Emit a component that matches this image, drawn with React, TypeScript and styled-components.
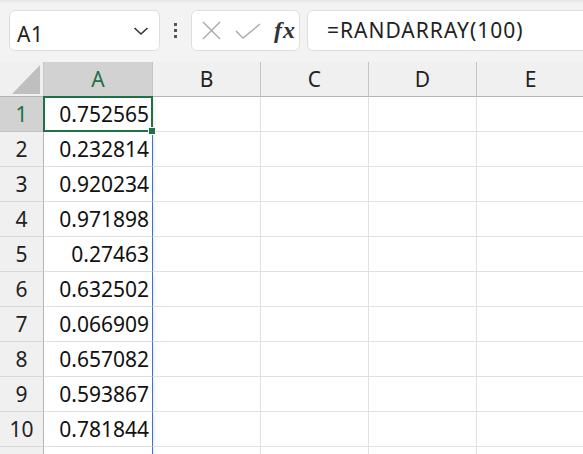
import React from 'react';
import styled, { createGlobalStyle } from 'styled-components';

// row 11 is only a sliver at the bottom edge, so it stays empty
const values = [
  '0.752565',
  '0.232814',
  '0.920234',
  '0.971898',
  '0.27463',
  '0.632502',
  '0.066909',
  '0.657082',
  '0.593867',
  '0.781844',
  '',
];

const columns = ['A', 'B', 'C', 'D', 'E'];

const GREEN = '#1e7145';
const GRID = '#e1e1e1';
const HEAD_LINE = '#c6c6c6';

const GlobalStyle = createGlobalStyle`
  html, body {
    margin: 0;
    padding: 0;
    background: #ffffff;
  }
`;

const App = () => {
  return (
    <>
      <GlobalStyle />
      <Window>
        <Toolbar>
          <NameBox>
            <NameText>A1</NameText>
            <svg width="16" height="10" viewBox="0 0 16 10">
              <path d="M1.5 2 L8 8 L14.5 2" fill="none" stroke="#333" strokeWidth="1.6" />
            </svg>
          </NameBox>
          <Grip>
            <Dot />
            <Dot />
            <Dot />
          </Grip>
          <FxBox>
            <svg width="19" height="19" viewBox="0 0 19 19">
              <path d="M1 1 L18 18 M18 1 L1 18" stroke="#a9a9a9" strokeWidth="1.4" fill="none" />
            </svg>
            <svg width="26" height="16" viewBox="0 0 26 16">
              <path d="M1 8 L8 15 L25 1" stroke="#a9a9a9" strokeWidth="1.4" fill="none" />
            </svg>
            <FxLabel>fx</FxLabel>
          </FxBox>
          <FormulaBar>=RANDARRAY(100)</FormulaBar>
        </Toolbar>

        <Sheet>
          <Corner>
            <svg width="29" height="30" viewBox="0 0 29 30">
              <polygon points="28,0 28,29 0,29" fill="#bfbfbf" />
            </svg>
          </Corner>
          {columns.map((c, i) => (
            <ColHeader key={c} selected={i === 0}>{c}</ColHeader>
          ))}

          {values.map((v, r) => (
            <React.Fragment key={r}>
              <RowHeader selected={r === 0}>{v ? r + 1 : ''}</RowHeader>
              {columns.map((c, i) => (
                <Cell key={c} active={r === 0 && i === 0} spill={i === 0}>
                  {i === 0 ? v : ''}
                </Cell>
              ))}
            </React.Fragment>
          ))}
        </Sheet>
      </Window>
    </>
  );
};

export default App;

const Window = styled.div`
  width: 583px;
  height: 454px;
  overflow: hidden;
  background: #ffffff;
  font-family: "Noto Sans", "Noto Sans CJK JP", sans-serif;
  color: #222;
`;

const Toolbar = styled.div`
  display: flex;
  align-items: center;
  height: 62px;
  padding: 10px 0 11px 9px;
  box-sizing: border-box;
  background: linear-gradient(#e6e6e6 0px, #f1f1f1 3px, #f3f3f3 6px);
`;

const NameBox = styled.div`
  display: flex;
  align-items: center;
  justify-content: space-between;
  width: 151px;
  height: 41px;
  padding: 6px 10px 0 7px;
  box-sizing: border-box;
  background: #fff;
  border: 1px solid #dedede;
  border-radius: 6px;

  svg {
    margin-top: -5px;
  }
`;

const NameText = styled.span`
  font-size: 21px;
  letter-spacing: 0.5px;
  color: #222;
`;

const Grip = styled.div`
  display: flex;
  flex-direction: column;
  align-items: center;
  gap: 3px;
  width: 31px;
  margin-top: -1px;
`;

const Dot = styled.span`
  width: 3px;
  height: 3px;
  background: #555;
`;

const FxBox = styled.div`
  display: flex;
  align-items: center;
  gap: 14px;
  width: 109px;
  height: 41px;
  padding-left: 10px;
  box-sizing: border-box;
  background: #fff;
  border: 1px solid #dedede;
  border-radius: 6px;
`;

const FxLabel = styled.span`
  margin-left: -1px;
  font-family: "Liberation Serif", serif;
  font-style: italic;
  font-weight: 700;
  font-size: 24px;
  color: #333;
  letter-spacing: 1px;
`;

const FormulaBar = styled.div`
  display: flex;
  align-items: center;
  flex: 1;
  height: 41px;
  margin-left: 7px;
  margin-right: -12px;
  padding: 0 0 2px 19px;
  box-sizing: border-box;
  background: #fff;
  border: 1px solid #dedede;
  border-radius: 6px;
  font-size: 21px;
  letter-spacing: 1px;
  color: #222;
`;

const Sheet = styled.div`
  display: grid;
  grid-template-columns: 44px 109px repeat(4, 108px);
  grid-auto-rows: 35px;
`;

const Corner = styled.div`
  display: flex;
  align-items: flex-end;
  justify-content: flex-end;
  padding: 0 2px 1px 0;
  background: #f0f0f0;
  border-right: 1px solid ${HEAD_LINE};
  border-bottom: 1px solid #b4b4b4;
  box-sizing: border-box;
`;

const ColHeader = styled.div<{ selected?: boolean }>`
  display: flex;
  align-items: center;
  justify-content: center;
  background: ${p => (p.selected ? '#d2d2d2' : '#f0f0f0')};
  border-right: 1px solid ${HEAD_LINE};
  border-bottom: 1px solid #b4b4b4;
  box-sizing: border-box;
  font-size: 21px;
  color: ${p => (p.selected ? GREEN : '#222')};
`;

const RowHeader = styled.div<{ selected?: boolean }>`
  display: flex;
  align-items: center;
  justify-content: center;
  background: ${p => (p.selected ? '#d2d2d2' : '#f0f0f0')};
  border-right: 1px solid #b4b4b4;
  border-bottom: 1px solid ${p => (p.selected ? '#c4c4c4' : '#d8d8d8')};
  box-sizing: border-box;
  font-size: 21px;
  color: ${p => (p.selected ? GREEN : '#222')};
`;

const Cell = styled.div<{ active?: boolean; spill?: boolean }>`
  position: relative;
  display: flex;
  align-items: center;
  justify-content: flex-end;
  padding-right: 3px;
  background: #fff;
  border-right: 1px solid ${p => (p.spill ? '#3a72d2' : GRID)};
  border-bottom: 1px solid ${GRID};
  box-sizing: border-box;
  font-size: 21px;
  color: #111;
  z-index: ${p => (p.active ? 3 : p.spill ? 2 : 1)};
  box-shadow: ${p => (p.spill ? '3px 0 4px -2px rgba(0, 0, 0, 0.1)' : 'none')};

  ${p =>
    p.active &&
    `
    &::after {
      content: '';
      position: absolute;
      top: -1px;
      left: -1px;
      right: -1px;
      bottom: -1px;
      border: 2px solid ${GREEN};
      pointer-events: none;
    }

    &::before {
      content: '';
      position: absolute;
      right: -4px;
      bottom: -4px;
      width: 6px;
      height: 6px;
      background: ${GREEN};
      border: 1px solid #fff;
      z-index: 2;
    }
  `}
`;
